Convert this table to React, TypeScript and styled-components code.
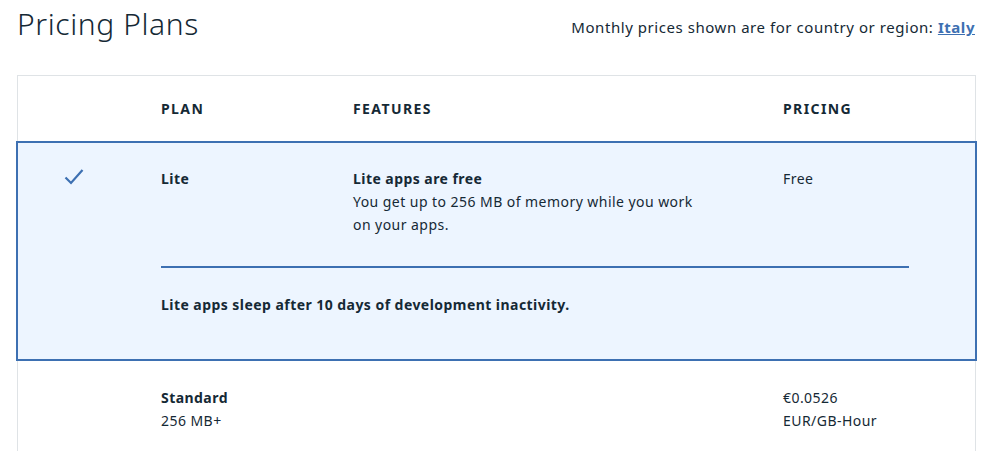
import React from "react";
import styled, { createGlobalStyle } from "styled-components";

const Global = createGlobalStyle`
  html, body { margin: 0; padding: 0; background: #ffffff; }
  body { font-family: "Noto Sans", "Open Sans", sans-serif; color: #152935; }
`;

const Page = styled.div`
  width: 993px;
  padding: 0 17px 0 17px;
  box-sizing: border-box;
`;

const TopBar = styled.div`
  display: flex;
  justify-content: space-between;
  align-items: center;
  height: 46px;
  margin-bottom: 29px;
`;

const Title = styled.h1`
  margin: 0;
  font-size: 30px;
  font-weight: 300;
  color: #152935;
  letter-spacing: 0.6px;
`;

const Region = styled.div`
  font-size: 15px;
  color: #152935;
  margin-top: 8px;
  margin-right: 1px;
  letter-spacing: 0.55px;
`;

const RegionLink = styled.a`
  color: #3d70b2;
  font-weight: 700;
  text-decoration: underline;
`;

const Table = styled.div`
  border: 1px solid #dfe3e6;
  border-bottom: none;
`;

const HeaderRow = styled.div`
  display: grid;
  grid-template-columns: 143px 192px 430px 1fr;
  height: 65px;
  align-items: center;
`;

const HeadCell = styled.div`
  font-size: 14px;
  font-weight: 700;
  letter-spacing: 1.4px;
  text-transform: uppercase;
  color: #152935;
`;

const SelectedBlock = styled.div`
  background: #edf5ff;
  border: 2px solid #3d70b2;
  margin: 0 -2px;
  padding-top: 24px;
  padding-bottom: 43px;
`;

const PlanGrid = styled.div`
  display: grid;
  grid-template-columns: 143px 192px 430px 1fr;
  align-items: start;
`;

const CheckCell = styled.div`
  display: flex;
  justify-content: flex-start;
  padding-left: 46px;
  padding-top: 1px;
`;

const Cell = styled.div`
  font-size: 14px;
  line-height: 23px;
  letter-spacing: 0.45px;
  color: #152935;
`;

const Strong = styled.div`
  font-weight: 700;
`;

const Desc = styled.div`
  max-width: 355px;
`;

const Divider = styled.div`
  margin: 30px 66px 0 143px;
  height: 2px;
  background: #3d70b2;
`;

const Note = styled.div`
  margin: 25px 0 0 143px;
  font-size: 14px;
  line-height: 23px;
  letter-spacing: 0.45px;
  font-weight: 700;
  color: #152935;
`;

const StandardRow = styled.div`
  display: grid;
  grid-template-columns: 143px 192px 430px 1fr;
  align-items: start;
  padding-top: 25px;
  height: 90px;
`;

const Check = () => (
  <svg width="20" height="18" viewBox="0 0 20 18" fill="none">
    <path d="M1.5 9.5 L7 15 L18.5 2" stroke="#3d70b2" strokeWidth="2.2" />
  </svg>
);

export default function App() {
  return (
    <>
      <Global />
      <Page>
        <TopBar>
          <Title>Pricing Plans</Title>
          <Region>
            Monthly prices shown are for country or region:{" "}
            <RegionLink href="#">Italy</RegionLink>
          </Region>
        </TopBar>
        <Table>
          <HeaderRow>
            <div />
            <HeadCell>Plan</HeadCell>
            <HeadCell>Features</HeadCell>
            <HeadCell>Pricing</HeadCell>
          </HeaderRow>
          <SelectedBlock>
            <PlanGrid>
              <CheckCell>
                <Check />
              </CheckCell>
              <Cell>
                <Strong>Lite</Strong>
              </Cell>
              <Cell>
                <Strong>Lite apps are free</Strong>
                <Desc>You get up to 256 MB of memory while you work on your apps.</Desc>
              </Cell>
              <Cell>Free</Cell>
            </PlanGrid>
            <Divider />
            <Note>Lite apps sleep after 10 days of development inactivity.</Note>
          </SelectedBlock>
          <StandardRow>
            <div />
            <Cell>
              <Strong>Standard</Strong>
              <div>256 MB+</div>
            </Cell>
            <div />
            <Cell>
              <div>€0.0526</div>
              <div>EUR/GB-Hour</div>
            </Cell>
          </StandardRow>
        </Table>
      </Page>
    </>
  );
}
